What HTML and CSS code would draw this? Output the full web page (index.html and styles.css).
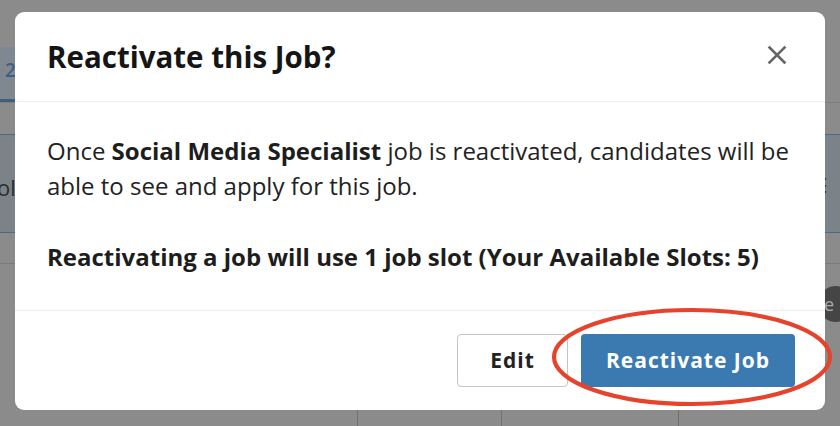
FILE: index.html
```html
<!DOCTYPE html>
<html lang="en">
<head>
<meta charset="utf-8">
<title>Reactivate this Job?</title>
<link rel="stylesheet" href="styles.css">
</head>
<body>
<div class="page">
  <div class="bg-top"></div>
  <div class="bg-tabs">
    <div class="bg-tab">2</div>
  </div>
  <div class="bg-gap"></div>
  <div class="bg-band">
    <span class="bg-band-left">ol</span>
    <span class="bg-band-right">⋮</span>
  </div>
  <div class="bg-gap2"></div>
  <div class="bg-row">
    <span class="bg-circle">e</span>
  </div>
  <div class="bg-cols">
    <div class="bg-col c1"></div>
    <div class="bg-col c2"></div>
    <div class="bg-col c3"></div>
    <div class="bg-col c4"></div>
  </div>
</div>

<div class="modal">
  <div class="modal-header">
    <h2 class="modal-title">Reactivate this Job?</h2>
    <button class="close" aria-label="Close">
      <svg width="20" height="20" viewBox="0 0 20 20"><path d="M2.5 2.5 L17.5 17.5 M17.5 2.5 L2.5 17.5" stroke="#666" stroke-width="2.6" stroke-linecap="square"/></svg>
    </button>
  </div>
  <div class="modal-body">
    <p>Once <strong>Social Media Specialist</strong> job is reactivated, candidates will be able to see and apply for this job.</p>
    <p class="strong">Reactivating a job will use 1 job slot (Your Available Slots: 5)</p>
  </div>
  <div class="modal-footer">
    <button class="btn btn-edit">Edit</button>
    <button class="btn btn-primary">Reactivate Job</button>
  </div>
  <svg class="annotation" width="290" height="104" viewBox="0 0 290 104">
    <ellipse cx="144" cy="50" rx="138" ry="47" fill="none" stroke="#e6432d" stroke-width="4.2"/>
  </svg>
</div>
</body>
</html>
```
FILE: styles.css
```css
html, body {
  margin: 0;
  padding: 0;
}
body {
  width: 840px;
  height: 426px;
  overflow: hidden;
  background: #8b8b8b;
  font-family: "Open Sans", "Noto Sans", sans-serif;
  position: relative;
}
.page {
  display: flex;
  flex-direction: column;
  height: 426px;
}
.bg-top { height: 47px; }
.bg-tabs {
  height: 55px;
  display: flex;
  border-bottom: 1px solid #7e7e7e;
}
.bg-tab {
  width: 110px;
  background: #7f8790;
  border-bottom: 3px solid #3e5f7d;
  color: #3e5f7d;
  font-size: 19px;
  font-weight: 600;
  padding: 10px 0 0 5px;
  box-sizing: border-box;
}
.bg-gap { height: 31px; }
.bg-band {
  height: 97px;
  background: #7b8389;
  border-top: 1px solid #4a6a86;
  border-bottom: 1px solid #4a6a86;
  display: flex;
  align-items: center;
  justify-content: space-between;
  color: #2b2b2b;
  font-size: 22px;
}
.bg-band-left { margin-left: -3px; margin-top: 6px; }
.bg-band-right { margin-right: 6px; color: #333; font-size: 18px; }
.bg-gap2 {
  height: 30px;
  border-bottom: 1px solid #7a7a7a;
}
.bg-row {
  height: 144px;
  display: flex;
  justify-content: flex-end;
  align-items: flex-start;
}
.bg-circle {
  width: 36px;
  height: 36px;
  border-radius: 50%;
  background: #454545;
  color: #aaa;
  margin: 22px -14px 0 0;
  font-size: 18px;
  line-height: 36px;
  text-indent: 6px;
}
.bg-cols {
  flex: 1;
  display: flex;
}
.bg-col { border-left: 1px solid #6f6f6f; }
.bg-col.c1 { width: 357px; border-left: none; }
.bg-col.c2 { width: 143px; }
.bg-col.c3 { width: 176px; }
.bg-col.c4 { flex: 1; }

.modal {
  position: absolute;
  left: 15px;
  top: 12px;
  width: 810px;
  height: 398px;
  background: #fff;
  border-radius: 9px;
  display: flex;
  flex-direction: column;
  color: #222;
}
.modal-header {
  height: 91px;
  box-sizing: border-box;
  border-bottom: 1px solid #eceef2;
  display: flex;
  align-items: center;
  justify-content: space-between;
  padding: 0 38px 0 32px;
}
.modal-title {
  margin: 0;
  font-size: 29.5px;
  font-weight: 700;
  color: #151515;
}
.close {
  border: none;
  background: none;
  padding: 0;
  width: 20px;
  height: 20px;
  display: flex;
  margin-top: -3px;
}
.modal-body {
  flex: 1;
  padding: 31px 30px 0 32px;
  border-bottom: 1px solid #eceef2;
  font-size: 24px;
  line-height: 35px;
}
.modal-body p { margin: 0 0 36px 0; }
.modal-body strong, .modal-body .strong { font-weight: 700; color: #1d1d1d; }
.modal-footer {
  height: 100px;
  box-sizing: border-box;
  display: flex;
  justify-content: flex-end;
  align-items: flex-start;
  gap: 13px;
  padding: 23px 30px 0 0;
}
.btn {
  height: 53px;
  border-radius: 4px;
  font-family: "Open Sans", "Noto Sans", sans-serif;
  font-size: 21px;
  font-weight: 700;
  letter-spacing: 1px;
  cursor: pointer;
}
.btn-edit {
  width: 111px;
  background: #fff;
  border: 1px solid #c5c5c5;
  color: #222;
}
.btn-primary {
  width: 214px;
  background: #3a7ab1;
  border: none;
  color: #fff;
}
.annotation {
  position: absolute;
  left: 533px;
  top: 295px;
  overflow: visible;
}
```
